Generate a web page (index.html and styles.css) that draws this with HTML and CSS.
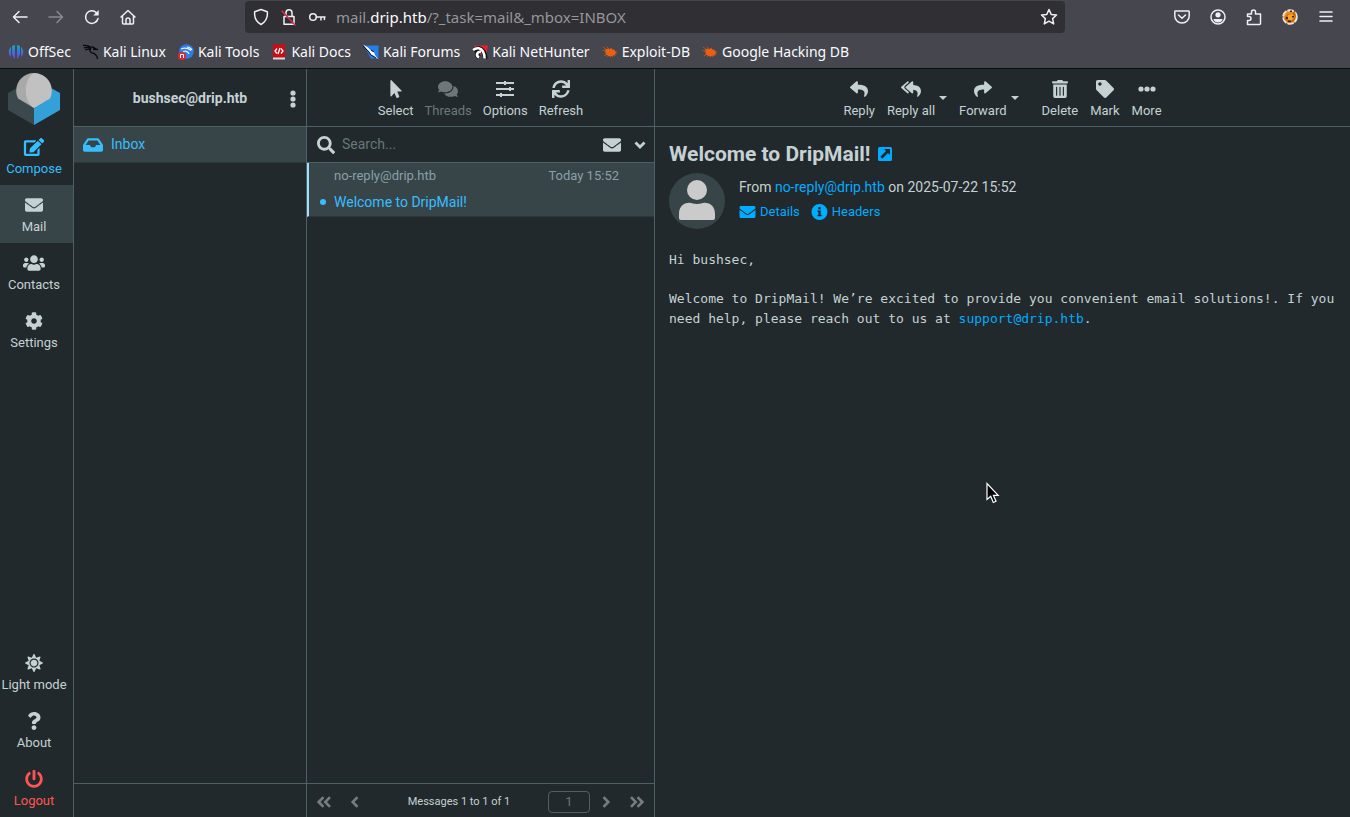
FILE: index.html
```html
<!DOCTYPE html>
<html lang="en">
<head>
<meta charset="utf-8">
<title>DripMail :: Inbox</title>
<link rel="stylesheet" href="styles.css">
</head>
<body>
<svg class="sprite" aria-hidden="true">
  <symbol id="i-edit" viewBox="0 0 576 512"><path d="M402.6 83.2l90.2 90.2c3.8 3.8 3.8 10 0 13.8L274.4 405.6l-92.8 10.3c-12.4 1.4-22.9-9.1-21.5-21.5l10.3-92.8L388.8 83.2c3.8-3.8 10-3.8 13.8 0zm162-22.9l-48.8-48.8c-15.2-15.2-39.9-15.2-55.2 0l-35.4 35.4c-3.8 3.8-3.8 10 0 13.8l90.2 90.2c3.8 3.8 10 3.8 13.8 0l35.4-35.4c15.2-15.3 15.2-40 0-55.2zM384 346.2V448H64V128h229.8c3.2 0 6.2-1.3 8.5-3.5l40-40c7.6-7.6 2.2-20.5-8.5-20.5H48C21.5 64 0 85.5 0 112v352c0 26.5 21.5 48 48 48h352c26.5 0 48-21.5 48-48V306.2c0-10.7-12.9-16-20.5-8.5l-40 40c-2.2 2.3-3.5 5.3-3.5 8.5z"/></symbol>
  <symbol id="i-mail" viewBox="0 0 512 512"><path d="M502.3 190.8c3.9-3.1 9.7-.2 9.7 4.7V400c0 26.5-21.5 48-48 48H48c-26.5 0-48-21.5-48-48V195.6c0-5 5.7-7.8 9.7-4.7 22.4 17.4 52.1 39.5 154.1 113.6 21.1 15.4 56.7 47.8 92.2 47.6 35.7.3 72-32.8 92.3-47.6 102-74.1 131.6-96.3 154-113.7zM256 320c23.2.4 56.6-29.2 73.4-41.4 132.7-96.3 142.8-104.7 173.4-128.7 5.8-4.5 9.2-11.5 9.2-18.9v-19c0-26.5-21.5-48-48-48H48c-26.5 0-48 21.5-48 48v19c0 7.4 3.4 14.3 9.2 18.9 30.6 23.9 40.7 32.4 173.4 128.7 16.8 12.2 50.2 41.8 73.4 41.4z"/></symbol>
  <symbol id="i-users" viewBox="0 0 640 512"><path d="M96 224c35.3 0 64-28.7 64-64s-28.7-64-64-64-64 28.7-64 64 28.7 64 64 64zm448 0c35.3 0 64-28.7 64-64s-28.7-64-64-64-64 28.7-64 64 28.7 64 64 64zm32 32h-64c-17.6 0-33.5 7.1-45.1 18.6 40.3 22.1 68.9 62 75.1 109.4h66c17.7 0 32-14.3 32-32v-32c0-35.3-28.7-64-64-64zm-256 0c61.9 0 112-50.1 112-112S381.9 32 320 32 208 82.1 208 144s50.1 112 112 112zm76.8 32h-8.3c-20.8 10-43.9 16-68.5 16s-47.6-6-68.5-16h-8.3C179.6 288 128 339.6 128 403.2V432c0 26.5 21.5 48 48 48h288c26.5 0 48-21.5 48-48v-28.8c0-63.6-51.6-115.2-115.2-115.2zm-223.7-13.4C161.5 263.1 145.6 256 128 256H64c-35.3 0-64 28.7-64 64v32c0 17.7 14.3 32 32 32h65.9c6.3-47.4 34.9-87.3 75.2-109.4z"/></symbol>
  <symbol id="i-cog" viewBox="0 0 512 512"><path d="M487.4 315.7l-42.6-24.6c4.3-23.2 4.3-47 0-70.2l42.6-24.6c4.9-2.8 7.1-8.6 5.5-14-11.1-35.6-30-67.8-54.7-94.6-3.8-4.1-10-5.1-14.8-2.3L380.8 110c-17.9-15.4-38.5-27.3-60.8-35.1V25.8c0-5.6-3.9-10.5-9.4-11.7-36.7-8.2-74.3-7.8-109.2 0-5.5 1.2-9.4 6.1-9.4 11.7V75c-22.2 7.9-42.8 19.8-60.8 35.1L88.7 85.5c-4.9-2.8-11-1.9-14.8 2.3-24.7 26.7-43.6 58.9-54.7 94.6-1.7 5.4.6 11.2 5.5 14L67.3 221c-4.3 23.2-4.3 47 0 70.2l-42.6 24.6c-4.9 2.8-7.1 8.6-5.5 14 11.1 35.6 30 67.8 54.7 94.6 3.8 4.1 10 5.1 14.8 2.3l42.6-24.6c17.9 15.4 38.5 27.3 60.8 35.1v49.2c0 5.6 3.9 10.5 9.4 11.7 36.7 8.2 74.3 7.8 109.2 0 5.5-1.2 9.4-6.1 9.4-11.7v-49.2c22.2-7.9 42.8-19.8 60.8-35.1l42.6 24.6c4.9 2.8 11 1.9 14.8-2.3 24.7-26.7 43.6-58.9 54.7-94.6 1.5-5.5-.7-11.3-5.6-14.1zM256 336c-44.1 0-80-35.9-80-80s35.9-80 80-80 80 35.9 80 80-35.9 80-80 80z"/></symbol>
  <symbol id="i-sun" viewBox="0 0 512 512"><path d="M256 160c-52.9 0-96 43.1-96 96s43.1 96 96 96 96-43.1 96-96-43.1-96-96-96zm246.4 80.5l-94.7-47.3 33.5-100.4c4.5-13.6-8.4-26.5-21.9-21.9l-100.4 33.5-47.4-94.8c-6.4-12.8-24.6-12.8-31 0l-47.3 94.7L92.7 70.8c-13.6-4.5-26.5 8.4-21.9 21.9l33.5 100.4-94.7 47.4c-12.8 6.4-12.8 24.6 0 31l94.7 47.3-33.5 100.5c-4.5 13.6 8.4 26.5 21.9 21.9l100.4-33.5 47.3 94.7c6.4 12.8 24.6 12.8 31 0l47.3-94.7 100.4 33.5c13.6 4.5 26.5-8.4 21.9-21.9l-33.5-100.4 94.7-47.3c13-6.5 13-24.7.2-31.1zm-155.9 106c-49.9 49.9-131.1 49.9-181 0-49.9-49.9-49.9-131.1 0-181 49.9-49.9 131.1-49.9 181 0 49.9 49.9 49.9 131.1 0 181z"/></symbol>
  <symbol id="i-question" viewBox="0 0 384 512"><path d="M202.021 0C122.202 0 70.503 32.703 29.914 91.026c-7.363 10.58-5.093 25.086 5.178 32.874l43.138 32.709c10.373 7.865 25.132 6.026 33.253-4.148 25.049-31.381 43.63-49.449 82.757-49.449 30.764 0 68.816 19.799 68.816 49.631 0 22.552-18.617 34.134-48.993 51.164-35.423 19.86-82.299 44.576-82.299 106.405V320c0 13.255 10.745 24 24 24h72.471c13.255 0 24-10.745 24-24v-5.773c0-42.86 125.268-44.645 125.268-160.627C377.504 66.256 286.902 0 202.021 0zM192 373.459c-38.196 0-69.271 31.075-69.271 69.271 0 38.195 31.075 69.27 69.271 69.27s69.271-31.075 69.271-69.271-31.075-69.27-69.271-69.27z"/></symbol>
  <symbol id="i-power" viewBox="0 0 512 512"><path d="M400 54.1c63 45 104 118.6 104 201.9 0 136.8-110.8 247.7-247.5 248C120 504.3 8.2 393 8 256.4 7.9 173.1 48.9 99.3 111.8 54.2c11.7-8.3 28-4.8 35 7.7L162.6 90c5.9 10.5 3.1 23.8-6.6 31-41.5 30.8-68 79.6-68 134.9-.1 92.3 74.5 168.1 168 168.1 91.6 0 168.6-74.2 168-169.1-.3-51.8-24.7-101.8-68.1-134-9.7-7.2-12.4-20.5-6.5-30.9l15.8-28.1c7-12.4 23.2-16.1 34.8-7.8zM296 264V24c0-13.3-10.7-24-24-24h-32c-13.3 0-24 10.7-24 24v240c0 13.3 10.7 24 24 24h32c13.3 0 24-10.7 24-24z"/></symbol>
  <symbol id="i-inbox" viewBox="0 0 576 512"><path d="M567.938 243.908L462.25 85.374A48.003 48.003 0 0 0 422.311 64H153.689a48 48 0 0 0-39.938 21.374L8.062 243.908A47.994 47.994 0 0 0 0 270.533V400c0 26.51 21.49 48 48 48h480c26.51 0 48-21.49 48-48V270.533a47.994 47.994 0 0 0-8.062-26.625zM162.252 128h251.497l85.333 128H376l-32 64H232l-32-64H76.918l85.334-128z"/></symbol>
  <symbol id="i-pointer" viewBox="0 0 320 512"><path d="M302.189 329.126H196.105l55.831 135.993c3.889 9.428-.555 19.999-9.444 23.999l-49.165 21.427c-9.165 4-19.443-.571-23.332-9.714l-53.053-129.136-86.664 89.138C18.729 472.71 0 463.554 0 447.977V18.299C0 1.899 19.921-6.096 30.277 5.443l284.412 292.542c11.472 11.179 3.007 31.141-12.5 31.141z"/></symbol>
  <symbol id="i-comments" viewBox="0 0 576 512"><path d="M416 192c0-88.4-93.1-160-208-160S0 103.6 0 192c0 34.3 14.1 65.9 38 92-13.4 30.2-35.5 54.2-35.8 54.5-2.2 2.3-2.8 5.7-1.5 8.7S4.8 352 8 352c36.6 0 66.9-12.3 88.7-25 32.2 15.7 70.3 25 111.3 25 114.9 0 208-71.6 208-160zm122 220c23.9-26 38-57.7 38-92 0-66.9-53.5-124.2-129.3-148.1.9 6.6 1.3 13.3 1.3 20.1 0 105.9-107.7 192-240 192-10.8 0-21.3-.8-31.7-1.9C207.8 439.6 281.8 480 368 480c41 0 79.1-9.2 111.3-25 21.8 12.7 52.1 25 88.7 25 3.2 0 6.1-1.9 7.3-4.8 1.3-2.9.7-6.3-1.5-8.7-.3-.3-22.4-24.2-35.8-54.5z"/></symbol>
  <symbol id="i-sliders" viewBox="0 0 18 18"><path d="M0 2h18v2H0zM0 8h18v2H0zM0 14h18v2H0zM8 1h2v4H8zM13 7h2v4h-2zM4 13h2v4H4z"/></symbol>
  <symbol id="i-sync" viewBox="0 0 512 512"><path d="M440.65 12.57l4 82.77A247.16 247.16 0 0 0 255.83 8C134.73 8 33.91 94.92 12.29 209.82A12 12 0 0 0 24.09 224h49.05a12 12 0 0 0 11.67-9.26 175.91 175.91 0 0 1 317-56.94l-101.46-4.86a12 12 0 0 0-12.57 12v47.41a12 12 0 0 0 12 12H500a12 12 0 0 0 12-12V12a12 12 0 0 0-12-12h-47.37a12 12 0 0 0-11.98 12.57zM255.83 432a175.61 175.61 0 0 1-146-77.8l101.8 4.87a12 12 0 0 0 12.57-12v-47.4a12 12 0 0 0-12-12H12a12 12 0 0 0-12 12V500a12 12 0 0 0 12 12h47.35a12 12 0 0 0 12-12.6l-4.15-82.57A247.17 247.17 0 0 0 255.83 504c121.11 0 221.93-86.92 243.55-201.82a12 12 0 0 0-11.8-14.18h-49.05a12 12 0 0 0-11.67 9.26A175.86 175.86 0 0 1 255.83 432z"/></symbol>
  <symbol id="i-search" viewBox="0 0 512 512"><path d="M505 442.7L405.3 343c-4.5-4.5-10.6-7-17-7H372c27.6-35.3 44-79.7 44-128C416 93.1 322.9 0 208 0S0 93.1 0 208s93.1 208 208 208c48.3 0 92.7-16.4 128-44v16.3c0 6.4 2.5 12.5 7 17l99.7 99.7c9.4 9.4 24.6 9.4 33.9 0l28.3-28.3c9.4-9.4 9.4-24.6.1-34zM208 336c-70.7 0-128-57.2-128-128 0-70.7 57.2-128 128-128 70.7 0 128 57.2 128 128 0 70.7-57.2 128-128 128z"/></symbol>
  <symbol id="i-reply" viewBox="0 0 512 512"><path d="M8.309 189.836L184.313 37.851C199.719 24.546 224 35.347 224 56.015v80.053c160.629 1.839 288 34.032 288 186.258 0 61.441-39.581 122.309-83.333 154.132-13.653 9.931-33.111-2.533-28.077-18.631 45.344-145.012-21.507-183.51-176.59-185.742V360c0 20.7-24.3 31.453-39.687 18.164l-176.004-152c-11.071-9.562-11.086-26.753 0-36.328z"/></symbol>
  <symbol id="i-forward" viewBox="0 0 512 512"><use href="#i-reply" width="512" height="512" transform="matrix(-1 0 0 1 512 0)"/></symbol>
  <symbol id="i-replyall" viewBox="0 0 576 512"><path d="M136.309 189.836L312.313 37.851C327.72 24.546 352 35.348 352 56.015v82.763c129.182 10.231 224 52.212 224 183.548 0 61.441-39.582 122.309-83.333 154.132-13.653 9.931-33.111-2.533-28.077-18.631 38.512-123.162-3.922-169.482-112.59-182.015v84.175c0 20.701-24.3 31.453-39.687 18.164L136.309 226.164c-11.071-9.561-11.086-26.753 0-36.328zm-128 36.328L184.313 378.15C199.7 391.439 224 380.687 224 359.986v-15.818l-108.606-93.785A55.96 55.96 0 0 1 96 207.998a55.953 55.953 0 0 1 19.393-42.38L224 71.832V56.015c0-20.667-24.28-31.469-39.687-18.164L8.309 189.836c-11.086 9.575-11.071 26.767 0 36.328z"/></symbol>
  <symbol id="i-trash" viewBox="0 0 448 512"><path d="M32 464a48 48 0 0 0 48 48h288a48 48 0 0 0 48-48V128H32zm272-256a16 16 0 0 1 32 0v224a16 16 0 0 1-32 0zm-96 0a16 16 0 0 1 32 0v224a16 16 0 0 1-32 0zm-96 0a16 16 0 0 1 32 0v224a16 16 0 0 1-32 0zM432 32H312l-9.4-18.7A24 24 0 0 0 281.1 0H166.8a23.72 23.72 0 0 0-21.4 13.3L136 32H16A16 16 0 0 0 0 48v32a16 16 0 0 0 16 16h416a16 16 0 0 0 16-16V48a16 16 0 0 0-16-16z"/></symbol>
  <symbol id="i-tag" viewBox="0 0 512 512"><path d="M0 252.118V48C0 21.49 21.49 0 48 0h204.118a48 48 0 0 1 33.941 14.059l211.882 211.882c18.745 18.745 18.745 49.137 0 67.882L293.823 497.941c-18.745 18.745-49.137 18.745-67.882 0L14.059 286.059A48 48 0 0 1 0 252.118zM112 64c-26.51 0-48 21.49-48 48s21.49 48 48 48 48-21.49 48-48-21.49-48-48-48z"/></symbol>
  <symbol id="i-dots" viewBox="0 0 18 18"><circle cx="3" cy="9" r="2.6"/><circle cx="9" cy="9" r="2.6"/><circle cx="15" cy="9" r="2.6"/></symbol>
  <symbol id="i-kebab" viewBox="0 0 18 18"><circle cx="9" cy="3" r="2.6"/><circle cx="9" cy="9" r="2.6"/><circle cx="9" cy="15" r="2.6"/></symbol>
  <symbol id="i-info" viewBox="0 0 16 16"><path fill-rule="evenodd" d="M8 0a8 8 0 1 1 0 16A8 8 0 0 1 8 0zM6 6.5v1.4h.9v3H6v1.4h4.1v-1.4h-.9V6.5zM8 2.9a1.4 1.4 0 1 0 0 2.8 1.4 1.4 0 0 0 0-2.8z"/></symbol>
  <symbol id="i-external" viewBox="0 0 14 14"><path fill-rule="evenodd" d="M1.5 0h11A1.5 1.5 0 0 1 14 1.500v11a1.500 1.500 0 0 1-1.500 1.500h-11A1.500 1.500 0 0 1 0 12.500v-11A1.500 1.500 0 0 1 1.500 0zM6 2l2 2-5.700 5.700 2 2L10 6l2 2V2z"/></symbol>
  <symbol id="i-down" viewBox="0 0 12 12"><path class="line" stroke-width="2.800" d="M1.500 3.500L6 8l4.500-4.500"/></symbol>
  <symbol id="i-prev" viewBox="0 0 14 14"><path class="line" stroke-width="2.600" d="M9.500 2.200L4.700 7l4.800 4.800"/></symbol>
  <symbol id="i-next" viewBox="0 0 14 14"><path class="line" stroke-width="2.600" d="M4.500 2.200L9.300 7l-4.800 4.800"/></symbol>
  <symbol id="i-first" viewBox="0 0 14 14"><path class="line" stroke-width="2.600" d="M6.500 2.200L1.700 7l4.800 4.800M13 2.200L8.200 7l4.800 4.800"/></symbol>
  <symbol id="i-last" viewBox="0 0 14 14"><path class="line" stroke-width="2.600" d="M1 2.200L5.800 7 1 11.800M7.500 2.200L12.300 7l-4.800 4.800"/></symbol>
  <symbol id="b-bug" viewBox="0 0 16 16"><path fill="#ec5e10" d="M3 5.500l3-1 1.500.8 2-1.800.3 1.800 2.500.5 1 1.700 2.500.2-2.300.8 1.600 1.800-2.300-.5.8 2.200-2.200-1-.2 2-1.800-1.200-1 1.500-1-1.400-2.600.5 1-1.400-3-.4 1.500-1L2 7.500l2 .2z"/><path fill="none" stroke="#ec5e10" stroke-width=".6" d="M1 3l4 3M.5 6.500L4 7M5 2.500l2 3M2 12l3-2"/></symbol>
</svg>

<div class="browser">
  <div class="navbar">
    <div class="nav-group">
      <button class="chrome-btn" aria-label="Back"><svg viewBox="0 0 18 18"><path d="M16 9H3M8 3.500L2.500 9 8 14.500"/></svg></button>
      <button class="chrome-btn dim" aria-label="Forward"><svg viewBox="0 0 18 18"><path d="M2 9h13M10 3.500L15.500 9 10 14.500"/></svg></button>
      <button class="chrome-btn" aria-label="Reload"><svg viewBox="0 0 18 18"><path d="M15 10.500a6.300 6.300 0 1 1-1.800-6"/><path class="solid" d="M15.700 2v5.500h-5.500z"/></svg></button>
      <button class="chrome-btn" aria-label="Home"><svg viewBox="0 0 18 18"><path d="M2 9l7-6.500L16 9M3.500 8v7c0 .6.400 1 1 1h9c.6 0 1-.4 1-1V8M7 16v-4a2 2 0 0 1 4 0v4"/></svg></button>
    </div>
    <div class="urlbar">
      <svg class="url-icon" viewBox="0 0 18 18"><path d="M9 1.500l6.300 2.300c.6 5-1 9.700-6.300 12.700-5.300-3-6.900-7.700-6.300-12.700z"/></svg>
      <svg class="url-icon" viewBox="0 0 18 18"><path d="M4 8.500h10v7.700H4zM6 8V4.800a3 3 0 0 1 6 0V8"/><path class="slash" d="M2 3l13 14"/></svg>
      <svg class="url-icon" viewBox="0 0 18 18"><circle cx="5" cy="9" r="3.300"/><path d="M8.300 9H17M13 9v3M16.400 9v2.500"/></svg>
      <div class="url">mail.<b>drip.htb</b>/?_task=mail&amp;_mbox=INBOX</div>
      <button class="chrome-btn" aria-label="Bookmark"><svg viewBox="0 0 18 18"><path d="M9 1.500l2.200 4.900 5.300.6-3.900 3.600 1.100 5.300L9 13.200l-4.700 2.700 1.100-5.300L1.500 7l5.300-.6z"/></svg></button>
    </div>
    <div class="nav-group">
      <button class="chrome-btn" aria-label="Pocket"><svg viewBox="0 0 18 18"><path d="M2.500 3h13c.4 0 .7.300.7.700V8c0 4-3.200 7-7.200 7S1.800 12 1.800 8V3.700c0-.4.300-.7.700-.7zM5.500 7L9 10.300 12.500 7"/></svg></button>
      <button class="chrome-btn" aria-label="Account"><svg viewBox="0 0 18 18"><circle cx="9" cy="9" r="7"/><circle class="solid" cx="9" cy="6.800" r="2.600"/><path class="solid" d="M4.500 11h9c0 2-2 3.500-4.500 3.500S4.500 13 4.500 11z"/></svg></button>
      <button class="chrome-btn" aria-label="Extensions"><svg viewBox="0 0 18 18"><path d="M2.500 16.500v-4H4a2 2 0 0 0 0-4H2.500V6h4V4a2 2 0 0 1 4 0v2h5v9.500c0 .6-.4 1-1 1z"/></svg></button>
      <button class="chrome-btn" aria-label="FoxyProxy"><svg viewBox="0 0 18 18"><circle cx="9" cy="9" r="6.800" fill="#ee8a12" stroke="#e9e4dc" stroke-width="2" stroke-dasharray="5 2.500"/><path fill="#c86407" stroke="none" d="M3 11l4-5 3 1 4-4 1 6-3 5-4 1z"/><path fill="#f5a62b" stroke="none" d="M7 7l4-1 3 3-4 4-4-2z"/><path fill="#3c2414" stroke="none" d="M5 9h2v2H5zM11 8h2v1.500h-2zM7 12.500h3V14H7zM9 2.500h2V4H9z"/></svg></button>
      <button class="chrome-btn" aria-label="Menu"><svg viewBox="0 0 18 18"><path d="M3 4h12M3 8.500h12M3 13h12"/></svg></button>
    </div>
  </div>
  <nav class="bookmarks">
    <a href="#"><svg viewBox="0 0 16 16"><defs><linearGradient id="off" gradientUnits="userSpaceOnUse" x1="0" y1="1" x2="0" y2="15"><stop offset="0" stop-color="#12a5c4"/><stop offset="1" stop-color="#6a41e8"/></linearGradient></defs><g fill="url(#off)"><path d="M3 3v10C0 11 0 5 3 3z"/><path d="M4 2.200C5 1.300 6 1 7 1v14c-1.500-1-2-3-3-5z"/><path d="M12 2.200C11 1.300 10 1 9 1v14c1.500-1 2-3 3-5z"/><path d="M13 3v10c3-2 3-8 0-10z"/></g></svg>OffSec</a>
    <a href="#"><svg viewBox="0 0 16 16"><path fill="none" stroke="#08090a" stroke-width="1.300" d="M0 1.500c4-.5 6 .3 8 2M1 3.800c3-.8 5-.4 7 .5M2 6c2-1 4-1 6-.5M7 3c3-.5 4 .2 6 2.200l2 .5M8 4c-2 2-1 4 1 4.800 3 .6 5 2 5.500 6.200M13 5.500l-3-.5"/></svg>Kali Linux</a>
    <a href="#"><svg viewBox="0 0 16 16"><circle cx="8.500" cy="7.500" r="7.300" fill="#2b7de9"/><path fill="none" stroke="#e4efff" stroke-width="1.200" d="M3 5c4-1.500 7-1 10 1.500M5 7.500c3-1 5 0 6 2.500M9 3c2 0 4 1.500 5 3"/><circle cx="4" cy="12" r="4" fill="#e5262b"/><path fill="none" stroke="#fff" d="M2.500 14v-3.500h3V14"/></svg>Kali Tools</a>
    <a href="#"><svg viewBox="0 0 16 16"><path fill="#cf0a12" d="M2 .5h12v13H2z"/><path fill="#ddd" d="M2 13.500h12v2H2z"/><path fill="none" stroke="#fff" stroke-width="1.300" d="M6 4.500L4 7l2 2.500M10 4.500L12 7l-2 2.500M9 4L7 10"/></svg>Kali Docs</a>
    <a href="#"><svg viewBox="0 0 16 16"><path fill="#2480ee" d="M1 1.500h14.500v13H8z"/><path fill="#fff" d="M0 .5l5 3 4 4 2 .5 1 3 3.500 4.500-5-4-2-.5-2-3z"/><path fill="none" stroke="#111" stroke-width=".9" d="M0 2l6 6 2 3 5 3M8 6l3 2"/></svg>Kali Forums</a>
    <a href="#"><svg viewBox="0 0 16 16"><path fill="#e8222d" d="M2 1.500h14l-2 11-4-1z"/><path fill="none" stroke="#111" stroke-width="4.600" d="M1.500 6.500c4-3.500 8-2 10 1.300 1.500 2.700 2 4.700 1.500 7M9 7.500c-4-1-5 4-1.500 6"/><path fill="none" stroke="#fff" stroke-width="2.600" d="M1 6c4-3 8-2 10 1.500 1.300 2.500 2 4.500 1.500 7M9 8c-4-1-5.500 3.500-2 5.500"/></svg>Kali NetHunter</a>
    <a href="#"><svg><use href="#b-bug"/></svg>Exploit-DB</a>
    <a href="#"><svg><use href="#b-bug"/></svg>Google Hacking DB</a>
  </nav>
</div>

<div class="app">
  <nav class="taskmenu">
    <div class="logo"><svg viewBox="0 0 52 52"><path fill="#3b494e" d="M0 20l9-5 17 20v17L0 37z"/><path fill="#34a0da" d="M52 20l-9-5-17 20v17l26-15z"/><path fill="#a9a9a9" d="M26 0C16 0 8.200 8 8.200 17.500c0 3 .6 5.500 1.800 8L26 35z"/><path fill="#c1c1c1" d="M26 0c10 0 17.800 8 17.800 17.500 0 3-.6 5.500-1.800 8L26 35C15 29 15 6 26 0z"/></svg></div>
    <a href="#" class="task compose"><svg><use href="#i-edit"/></svg>Compose</a>
    <a href="#" class="task selected"><svg><use href="#i-mail"/></svg>Mail</a>
    <a href="#" class="task"><svg><use href="#i-users"/></svg>Contacts</a>
    <a href="#" class="task"><svg><use href="#i-cog"/></svg>Settings</a>
    <div class="spacer"></div>
    <a href="#" class="task"><svg><use href="#i-sun"/></svg>Light mode</a>
    <a href="#" class="task"><svg><use href="#i-question"/></svg>About</a>
    <a href="#" class="task logout"><svg><use href="#i-power"/></svg>Logout</a>
  </nav>

  <section class="folders">
    <header class="head account">
      <span></span><strong>bushsec@drip.htb</strong>
      <button class="icon-btn" aria-label="Folder actions"><svg><use href="#i-kebab"/></svg></button>
    </header>
    <a href="#" class="folder"><svg><use href="#i-inbox"/></svg>Inbox</a>
    <div class="spacer"></div>
    <footer class="foot"></footer>
  </section>

  <section class="list">
    <header class="head toolbar">
      <button class="tool"><svg><use href="#i-pointer"/></svg>Select</button>
      <button class="tool" disabled><svg><use href="#i-comments"/></svg>Threads</button>
      <button class="tool"><svg><use href="#i-sliders"/></svg>Options</button>
      <button class="tool"><svg><use href="#i-sync"/></svg>Refresh</button>
    </header>
    <form class="search">
      <label for="q" aria-label="Search"><svg><use href="#i-search"/></svg></label>
      <input id="q" type="text" placeholder="Search...">
      <button type="button" class="icon-btn" aria-label="Unread"><svg><use href="#i-mail"/></svg></button>
      <button type="button" class="icon-btn small" aria-label="Search options"><svg><use href="#i-down"/></svg></button>
    </form>
    <article class="message">
      <div class="message-meta"><span>no-reply@drip.htb</span><time>Today 15:52</time></div>
      <a href="#" class="message-subject"><i class="unread"></i>Welcome to DripMail!</a>
    </article>
    <div class="spacer"></div>
    <footer class="foot pager">
      <button class="icon-btn" aria-label="First page"><svg><use href="#i-first"/></svg></button>
      <button class="icon-btn" aria-label="Previous page"><svg><use href="#i-prev"/></svg></button>
      <span class="count">Messages 1 to 1 of 1</span>
      <input type="text" value="1" aria-label="Page">
      <button class="icon-btn" aria-label="Next page"><svg><use href="#i-next"/></svg></button>
      <button class="icon-btn" aria-label="Last page"><svg><use href="#i-last"/></svg></button>
    </footer>
  </section>

  <main class="content">
    <header class="head toolbar wide">
      <button class="tool"><svg><use href="#i-reply"/></svg>Reply</button>
      <div class="split">
        <button class="tool"><svg><use href="#i-replyall"/></svg>Reply all</button>
        <button class="caret" aria-label="Reply all options"></button>
      </div>
      <div class="split">
        <button class="tool"><svg><use href="#i-forward"/></svg>Forward</button>
        <button class="caret" aria-label="Forward options"></button>
      </div>
      <button class="tool apart"><svg><use href="#i-trash"/></svg>Delete</button>
      <button class="tool"><svg><use href="#i-tag"/></svg>Mark</button>
      <button class="tool"><svg><use href="#i-dots"/></svg>More</button>
    </header>
    <div class="mail">
      <h1>Welcome to DripMail! <a href="#" aria-label="Open in new window"><svg><use href="#i-external"/></svg></a></h1>
      <div class="sender">
        <svg class="avatar" viewBox="0 0 56 56"><circle cx="28" cy="28" r="28" fill="#374549"/><ellipse cx="28" cy="17" rx="10" ry="10" fill="#cbcbcb"/><path fill="#cbcbcb" d="M10 45V41c0-7 4-11.300 10.500-11.300 2.500 0 4 1.300 7.500 1.300s5-1.300 7.500-1.300C42 29.700 46 34 46 41v4c0 1.300-.7 2-2 2H12c-1.300 0-2-.7-2-2z"/></svg>
        <div>
          <p class="from">From <a href="#">no-reply@drip.htb</a> on 2025-07-22 15:52</p>
          <p class="links"><a href="#"><svg><use href="#i-mail"/></svg>Details</a><a href="#"><svg><use href="#i-info"/></svg>Headers</a></p>
        </div>
      </div>
      <div class="body">
        <p>Hi bushsec,</p>
        <p>Welcome to DripMail! We’re excited to provide you convenient email solutions!. If you need help, please reach out to us at <a href="#">support@drip.htb</a>.</p>
      </div>
    </div>
    <svg class="cursor" viewBox="0 0 14 22"><path fill="#000" stroke="#fff" stroke-width="1.200" d="M1 1.500v16l3.700-3.300 2.600 6.300 2.700-1.200-2.600-6h4.800z"/></svg>
  </main>
</div>
</body>
</html>
```
FILE: styles.css
```css
* { box-sizing: border-box; }
body {
  margin: 0;
  height: 100vh;
  display: flex;
  flex-direction: column;
  background: #21292c;
  color: #c5d1d3;
  font: 14px/21px Roboto, sans-serif;
}
a { color: #00acff; text-decoration: none; }
p, h1 { margin: 0; }
button { padding: 0; border: 0; background: none; color: inherit; font: inherit; }
input { font: inherit; color: inherit; background: none; border: 0; min-width: 0; }
svg { display: block; fill: currentColor; width: 18px; height: 18px; flex: none; }
.sprite { position: absolute; width: 0; height: 0; }
.line { fill: none; stroke: currentColor; }
.spacer { flex: 1; }

/* Browser chrome */
.browser {
  background: #45464e;
  border-bottom: 1px solid #0c0d0e;
  color: #fbfbfe;
  font: 15px/20px "Noto Sans", sans-serif;
}
.navbar { display: flex; align-items: center; height: 34px; padding: 0 15px 0 11px; }
.nav-group { display: flex; gap: 18px; }
.chrome-btn svg, .url-icon {
  fill: none; stroke: #f0f0f4; stroke-width: 1.5;
  stroke-linecap: round; stroke-linejoin: round;
}
.chrome-btn .solid { fill: #f0f0f4; stroke: none; }
.chrome-btn.dim { opacity: .4; }
.url-icon .slash { stroke: #e22850; }
.urlbar {
  flex: 1;
  display: flex;
  align-items: center;
  gap: 10px;
  height: 32px;
  margin: 0 108px;
  padding: 0 7px;
  border-radius: 4px;
  background: #2f2f34;
}
.url { flex: 1; color: #96969b; }
.url b { font-weight: 400; color: #fbfbfe; }
.bookmarks { display: flex; align-items: center; gap: 12px; height: 34px; padding: 2px 8px 0; font-size: 14px; }
.bookmarks a { display: flex; align-items: center; gap: 4px; color: #fbfbfe; white-space: nowrap; }
.bookmarks svg { width: 16px; height: 16px; }

/* App frame */
.app { flex: 1; display: flex; min-height: 0; }
.taskmenu, .folders, .list { display: flex; flex-direction: column; flex: none; border-right: 1px solid #4d6066; }
.taskmenu { width: 74px; }
.folders { width: 233px; }
.list { width: 348px; }
.content { flex: 1; min-width: 0; position: relative; }
.head { display: flex; height: 58px; border-bottom: 1px solid #4d6066; }
.foot { height: 34px; border-top: 1px solid #4d6066; }

.logo { height: 58px; padding: 4px 8px; }
.logo svg { width: 52px; height: 52px; }
.task {
  display: flex;
  flex-direction: column;
  align-items: center;
  gap: 2px;
  height: 58px;
  padding: 11px 5px 0 0;
  color: #c5d1d3;
  font-size: 13px;
  white-space: nowrap;
}
.task svg { width: 22px; }
.task.selected { background: #374549; }
.task.compose { color: #37beff; }
.task.logout { color: #ff5552; }

.account { display: grid; grid-template-columns: 26px 1fr 26px; align-items: center; padding-top: 2px; text-align: center; }
.icon-btn svg { margin: auto; }
.folder {
  display: flex;
  align-items: center;
  gap: 8px;
  height: 36px;
  padding: 0 9px;
  background: #374549;
  border-bottom: 1px solid #2c373a;
  color: #37beff;
}
.folder svg { width: 20px; }

/* Toolbars */
.toolbar { justify-content: center; gap: 11px; }
.toolbar.wide { gap: 12px; }
.tool {
  display: flex;
  flex-direction: column;
  align-items: center;
  gap: 2px;
  padding-top: 11px;
  font-size: 13px;
  white-space: nowrap;
}
.tool svg { width: 20px; }
.tool:disabled { color: #6d7678; }
.split { display: flex; gap: 4px; }
.caret {
  align-self: center;
  width: 8px;
  height: 4px;
  border: 4px solid transparent;
  border-top-color: #c5d1d3;
  border-bottom: 0;
}
.apart { margin-left: 11px; }

/* Message list */
.search { display: flex; align-items: center; height: 36px; padding: 0 0 0 10px; border-bottom: 1px solid #4d6066; }
.search input { flex: 1; padding: 0 7px; outline: 0; }
.search input::placeholder { color: #67767a; opacity: 1; }
.search .icon-btn { width: 28px; }
.search .small svg { width: 12px; height: 12px; }
.message { height: 54px; padding: 2px 35px 0 13px; background: #374549; border-left: 2px solid #9fdfff; border-bottom: 1px solid #2c373a; }
.message-meta { display: flex; justify-content: space-between; padding-left: 12px; color: #8b9fa7; font-size: 13px; }
.message-subject { display: flex; align-items: center; gap: 8px; height: 32px; color: #37beff; }
.unread { width: 6px; height: 6px; border-radius: 50%; background: currentColor; margin-left: -2px; }
.pager { display: flex; align-items: center; font-size: 11px; padding: 2px 2px 0 1px; }
.pager .icon-btn { width: 31px; color: #757d80; }
.pager .icon-btn svg { width: 14px; height: 14px; }
.count { flex: 1; text-align: center; white-space: nowrap; }
.pager input { width: 42px; height: 22px; border: 1px solid #4d6066; border-radius: 4px; text-align: center; color: #67767a; font-size: 13px; }

/* Mail view */
.mail { padding: 14px; }
h1 { display: flex; align-items: center; gap: 7px; font-size: 21px; line-height: 26px; font-weight: 700; }
h1 svg { width: 14px; height: 14px; }
.sender { display: flex; gap: 14px; margin-top: 6px; }
.avatar { width: 56px; height: 56px; }
.from { margin-top: 4px; }
.links { display: flex; gap: 11px; margin-top: 3px; font-size: 13px; }
.links a { display: flex; align-items: center; gap: 4px; }
.links svg { width: 17px; height: 16px; }
.body { margin-top: 21px; font: 13px/20px "DejaVu Sans Mono", monospace; }
.body p + p { margin-top: 19px; }
.cursor { position: absolute; left: 331px; top: 413px; width: 14px; height: 22px; }
```
